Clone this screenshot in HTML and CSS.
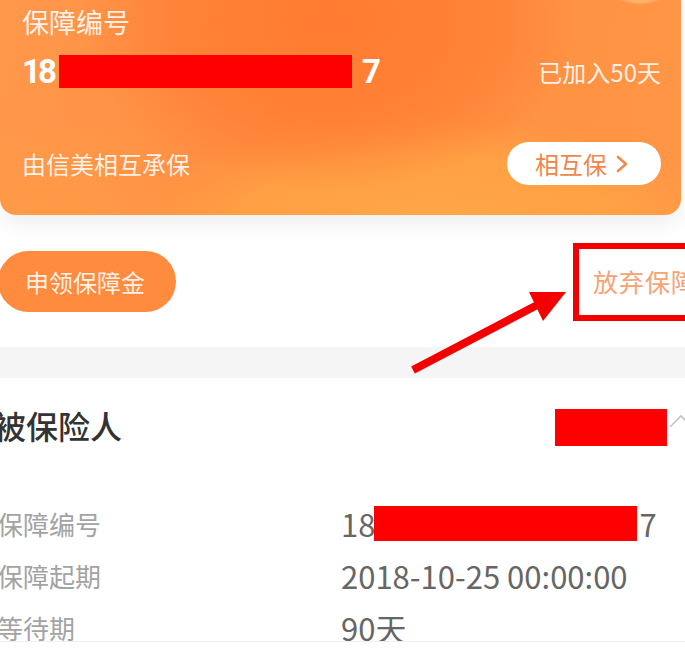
FILE: index.html
```html
<!DOCTYPE html>
<html lang="zh-CN">
<head>
  <meta charset="UTF-8" />
  <title>保障详情</title>
  <link rel="stylesheet" href="styles.css">
</head>
<body>
  <div class="screen">
    <div class="card">
      <div class="card-label">保障编号</div>
      <div class="card-row">
        <div class="card-no">18<span class="mask mask-card"></span>7</div>
        <div class="card-days">已加入50天</div>
      </div>
      <div class="card-row card-foot">
        <div class="card-by">由信美相互承保</div>
        <div class="card-link">相互保
          <svg class="chev" viewBox="0 0 14 20" width="14" height="20"><polyline points="3,3 11,10 3,17" fill="none" stroke="#f08a4c" stroke-width="2.6" stroke-linecap="round" stroke-linejoin="round"/></svg>
        </div>
      </div>
    </div>

    <div class="actions">
      <div class="btn-claim">申领保障金</div>
      <div class="btn-quit">放弃保障</div>
    </div>

    <div class="gap"></div>

    <div class="info">
      <div class="info-head">
        <div class="info-title">被保险人</div>
        <div class="info-right">
          <span class="mask mask-name"></span>
          <svg class="up" viewBox="0 0 28 20" width="28" height="20"><polyline points="2,15 13,4 24,15" fill="none" stroke="#c4c4c4" stroke-width="1.6"/></svg>
        </div>
      </div>
      <div class="info-row"><span class="info-k">保障编号</span><span class="info-v">18<span class="mask mask-no"></span>7</span></div>
      <div class="info-row"><span class="info-k">保障起期</span><span class="info-v">2018-10-25 00:00:00</span></div>
      <div class="info-row"><span class="info-k">等待期</span><span class="info-v">90天</span></div>
    </div>

    <!-- annotation drawn over the screenshot -->
    <div class="mark-box"></div>
    <svg class="mark-arrow" width="685" height="648" viewBox="0 0 685 648">
      <line x1="413" y1="370" x2="543" y2="302" stroke="#f50000" stroke-width="8"/>
      <polygon points="566,292 529,292 543,321" fill="#f50000"/>
    </svg>
  </div>
</body>
</html>
```

FILE: styles.css
```css
/* Base */
html, body {
  margin: 0;
  padding: 0;
  background: #fff;
}
body {
  font-family: "Noto Sans CJK SC", "Noto Sans", sans-serif;
  color: #333;
}
.screen {
  position: relative;
  width: 685px;
  height: 641px;
  overflow: hidden;
  border-bottom: 1px solid #efefef;
}

/* Orange card */
.card {
  margin-top: -20px;
  margin-right: 4px;
  height: 235px;
  box-sizing: border-box;
  padding: 22px 20px 30px 22px;
  border-radius: 16px;
  color: rgba(255, 255, 255, 0.88);
  display: flex;
  flex-direction: column;
  box-shadow: 0 8px 22px rgba(0, 0, 0, 0.07);
  background:
    radial-gradient(circle 46px at 640px -21px, rgba(255, 182, 120, 0.85) 0, rgba(255, 182, 120, 0.85) 93%, rgba(255,182,120,0) 100%),
    radial-gradient(ellipse 250px 170px at 330px 40px, #ff7c32 0, rgba(255, 124, 50, 0.7) 60%, rgba(255, 124, 50, 0) 100%),
    radial-gradient(ellipse 300px 120px at 430px 255px, #ffa846 0, rgba(255, 164, 68, 0.8) 65%, rgba(255, 164, 68, 0) 100%),
    radial-gradient(ellipse 160px 120px at 60px 250px, rgba(255, 160, 70, 0.6) 0, rgba(255, 160, 70, 0) 100%),
    linear-gradient(100deg, #ff984c 0%, #ff8c40 45%, #ff9646 100%);
}
.card-label {
  font-size: 27px;
  line-height: 40px;
}
.card-row {
  display: flex;
  justify-content: space-between;
  align-items: center;
}
.card-no {
  margin-top: 9px;
  height: 40px;
  display: flex;
  align-items: center;
  font-family: Roboto, "Liberation Sans", sans-serif;
  font-weight: 700;
  font-size: 33px;
  letter-spacing: -3px;
  color: #fff;
}
.card-days {
  margin-top: 9px;
  font-size: 24px;
}
.card-foot {
  margin-top: auto;
}
.card-by {
  font-size: 24px;
}
.card-link {
  width: 154px;
  height: 43px;
  box-sizing: border-box;
  padding-left: 28px;
  border-radius: 22px;
  background: #fff;
  color: #f0874a;
  font-size: 24px;
  display: flex;
  align-items: center;
  gap: 8px;
}

/* Redaction blocks */
.mask {
  display: inline-block;
  background: #ff0000;
}
.mask-card {
  width: 293px;
  height: 33px;
  margin: 0 10px 0 5px;
}
.mask-name {
  width: 112px;
  height: 37px;
}
.mask-no {
  width: 263px;
  height: 35px;
  margin: 0 2px 0 -1px;
  vertical-align: middle;
}

/* Buttons row */
.actions {
  height: 132px;
  display: flex;
  justify-content: space-between;
  align-items: center;
  margin-left: -2px;
  margin-right: -12px;
}
.btn-claim {
  width: 178px;
  height: 61px;
  box-sizing: border-box;
  padding-left: 27px;
  border-radius: 31px;
  background: #ff8b3e;
  color: rgba(255, 255, 255, 0.9);
  font-size: 24px;
  display: flex;
  align-items: center;
}
.btn-quit {
  font-size: 25px;
  color: #f6a272;
  letter-spacing: 1px;
}

.gap {
  height: 31px;
  background: #f5f5f5;
}

/* Insured person */
.info {
  margin-left: -3px;
  margin-right: -11px;
}
.info-head {
  height: 119px;
  box-sizing: border-box;
  padding-top: 27px;
  display: flex;
  justify-content: space-between;
  align-items: flex-start;
}
.info-title {
  font-size: 32px;
  line-height: 40px;
  font-weight: 500;
  color: #333;
  margin-left: -3px;
}
.info-right {
  display: flex;
  align-items: center;
  height: 40px;
  margin-top: 2px;
}
.up {
  margin-left: 1px;
  margin-top: -10px;
}
.info-row {
  display: flex;
  height: 52px;
  align-items: center;
}
.info-k {
  width: 344px;
  font-size: 26px;
  color: #a3a3a3;
}
.info-v {
  font-size: 31px;
  color: #666;
  display: flex;
  align-items: center;
}

/* Annotation over the page */
.mark-box {
  position: absolute;
  left: 573px;
  top: 243px;
  width: 130px;
  height: 78px;
  box-sizing: border-box;
  border: 6px solid #f50000;
}
.mark-arrow {
  position: absolute;
  left: 0;
  top: 0;
  pointer-events: none;
}
```
